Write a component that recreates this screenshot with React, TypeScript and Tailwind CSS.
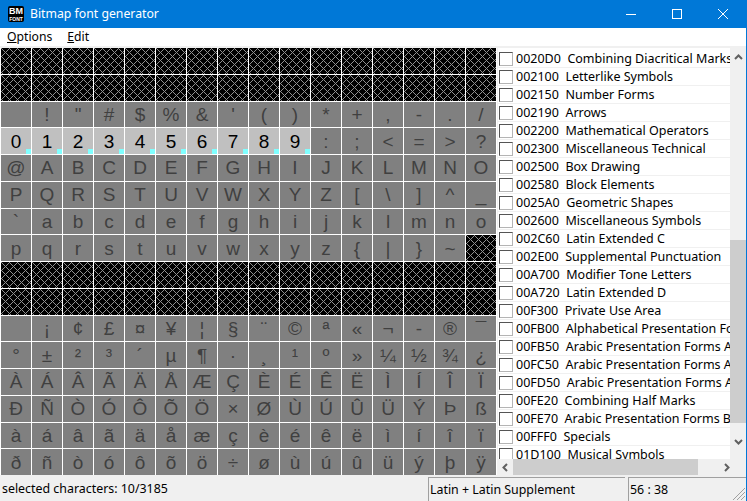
import React from 'react';

const blocks = [
  ['0020D0', 'Combining Diacritical Marks'],
  ['002100', 'Letterlike Symbols'],
  ['002150', 'Number Forms'],
  ['002190', 'Arrows'],
  ['002200', 'Mathematical Operators'],
  ['002300', 'Miscellaneous Technical'],
  ['002500', 'Box Drawing'],
  ['002580', 'Block Elements'],
  ['0025A0', 'Geometric Shapes'],
  ['002600', 'Miscellaneous Symbols'],
  ['002C60', 'Latin Extended C'],
  ['002E00', 'Supplemental Punctuation'],
  ['00A700', 'Modifier Tone Letters'],
  ['00A720', 'Latin Extended D'],
  ['00F300', 'Private Use Area'],
  ['00FB00', 'Alphabetical Presentation Forms'],
  ['00FB50', 'Arabic Presentation Forms A'],
  ['00FC50', 'Arabic Presentation Forms A'],
  ['00FD50', 'Arabic Presentation Forms A'],
  ['00FE20', 'Combining Half Marks'],
  ['00FE70', 'Arabic Presentation Forms B'],
  ['00FFF0', 'Specials'],
  ['01D100', 'Musical Symbols'],
];

function Hatch() {
  return (
    <svg width="30" height="27" className="block absolute top-0 left-0" shapeRendering="crispEdges">
      <rect width="30" height="27" fill="#000" />
      {Array.from({ length: 27 * 30 }).map((_, i) => {
        const x = i % 30;
        const y = Math.floor(i / 30);
        const a = (x + y) % 8;
        const b = (x - y + 80) % 8;
        return a === 0 || b === 0 ? <rect key={i} x={x} y={y} width="1" height="1" fill="#909090" /> : null;
      })}
    </svg>
  );
}

function Cell({ code }: { code: number }) {
  const empty = code < 0x20 || (code >= 0x7f && code < 0xa0);
  const selected = code >= 0x30 && code <= 0x39;
  if (empty) {
    return (
      <div className="relative overflow-hidden bg-black">
        <Hatch />
      </div>
    );
  }
  const ch = code === 0xad ? '-' : String.fromCharCode(code);
  return (
    <div
      className={`relative flex items-center justify-center overflow-hidden font-['Liberation_Sans',sans-serif] text-[19px] leading-[27px] ${
        selected ? 'bg-[#c0c0c0] text-black' : 'bg-[#808080] text-[#404040]'
      }`}
    >
      {ch}
      {selected && <span className="absolute right-0 bottom-0 h-[5px] w-[5px] bg-[#80ffff]" />}
    </div>
  );
}

function Chevron({ d }: { d: string }) {
  return (
    <svg width="9" height="9" viewBox="0 0 9 9" fill="none" stroke="#606060" strokeWidth="2">
      <path d={d} />
    </svg>
  );
}

export default function App() {
  return (
    <div className="flex h-[501px] w-[747px] flex-col overflow-hidden border-r border-[#0078d7] bg-[#f0f0f0] font-['Noto_Sans',sans-serif] text-black">
      {/* title bar */}
      <div className="flex h-[28px] shrink-0 items-center bg-[#0078d7] text-white">
        <div className="ml-[8px] flex h-[16px] w-[16px] flex-col items-center justify-center rounded-[2px] bg-black font-['Liberation_Sans',sans-serif] font-bold leading-none">
          <span className="text-[9px] leading-[9px]">BM</span>
          <span className="text-[5px] leading-[6px]">FONT</span>
        </div>
        <span className="ml-[6px] text-[12.25px]">Bitmap font generator</span>
        <div className="ml-auto flex h-full">
          <div className="flex w-[46px] items-center justify-center">
            <svg width="10" height="10" shapeRendering="crispEdges"><path d="M0 5.500h10" stroke="#fff" /></svg>
          </div>
          <div className="flex w-[46px] items-center justify-center">
            <svg width="10" height="10" shapeRendering="crispEdges"><rect x=".5" y=".5" width="9" height="9" fill="none" stroke="#fff" /></svg>
          </div>
          <div className="flex w-[46px] items-center justify-center">
            <svg width="10" height="10"><path d="M0 0l10 10M10 0L0 10" stroke="#fff" /></svg>
          </div>
        </div>
      </div>

      {/* menu */}
      <div className="flex h-[18px] shrink-0 items-center gap-[15px] bg-white pl-[7px] text-[12.2px] leading-[18px]">
        <span><u>O</u>ptions</span>
        <span><u>E</u>dit</span>
      </div>

      <div className="mt-[2px] flex h-[427px] shrink-0">
        {/* character grid */}
        <div className="grid h-[427px] w-[497px] shrink-0 grid-cols-[repeat(16,30px)] grid-rows-[repeat(16,1fr)] gap-[1px] bg-white pl-[1px]">
          {Array.from({ length: 256 }).map((_, i) => (
            <Cell key={i} code={i} />
          ))}
        </div>

        {/* unicode subsets */}
        <div className="flex min-w-0 flex-1 flex-col">
          <div className="flex h-[411px] min-h-0">
            <div className="ml-[1px] w-[232px] overflow-hidden bg-white pt-[2px] text-[12.5px]">
              {blocks.map(([code, name]) => (
                <div key={code + name} className="flex h-[18px] items-center border-b border-[#f0f0f0]">
                  <span className="ml-[1px] h-[14px] w-[14px] shrink-0 border border-t-[#555] border-r-[#b4b4b4] border-b-[#b4b4b4] border-l-[#555] bg-white" />
                  <span className="ml-[3px] whitespace-pre leading-[17px]">{code}  {name}</span>
                </div>
              ))}
            </div>
            <div className="flex w-[16px] flex-col items-center bg-[#f0f0f0]">
              <div className="flex h-[18px] shrink-0 items-center justify-center"><Chevron d="M1 6l3.500-3.500L8 6" /></div>
              <div className="h-[174px] shrink-0" />
              <div className="h-[183px] w-full shrink-0 bg-[#cdcdcd]" />
              <div className="flex flex-1 items-center justify-center"><Chevron d="M1 3l3.500 3.500L8 3" /></div>
            </div>
          </div>
          <div className="flex h-[16px] shrink-0 items-center">
            <div className="flex w-[16px] justify-center"><Chevron d="M6 1L2.500 4.500 6 8" /></div>
            <div className="h-full w-[185px] bg-[#cdcdcd]" />
            <div className="ml-[20px] flex w-[16px] justify-center"><Chevron d="M3 1l3.500 3.500L3 8" /></div>
          </div>
        </div>
      </div>

      {/* status bar */}
      <div className="relative flex h-[26px] shrink-0 items-end text-[12.4px] leading-[24px]">
        <div className="h-[24px] w-[428px] pl-[2px]">selected characters: 10/3185</div>
        <div className="h-[24px] w-[197px] border-t border-l border-[#a0a0a0] pl-[1px]">Latin + Latin Supplement</div>
        <div className="ml-[3px] h-[24px] flex-1 border-t border-l border-[#a0a0a0] pl-[1px]">56 : 38</div>
        <svg width="14" height="14" className="absolute right-0 bottom-0" stroke="#a0a0a0">
          <path d="M13 1L1 13M13 5L5 13M13 9L9 13" />
        </svg>
      </div>
    </div>
  );
}
